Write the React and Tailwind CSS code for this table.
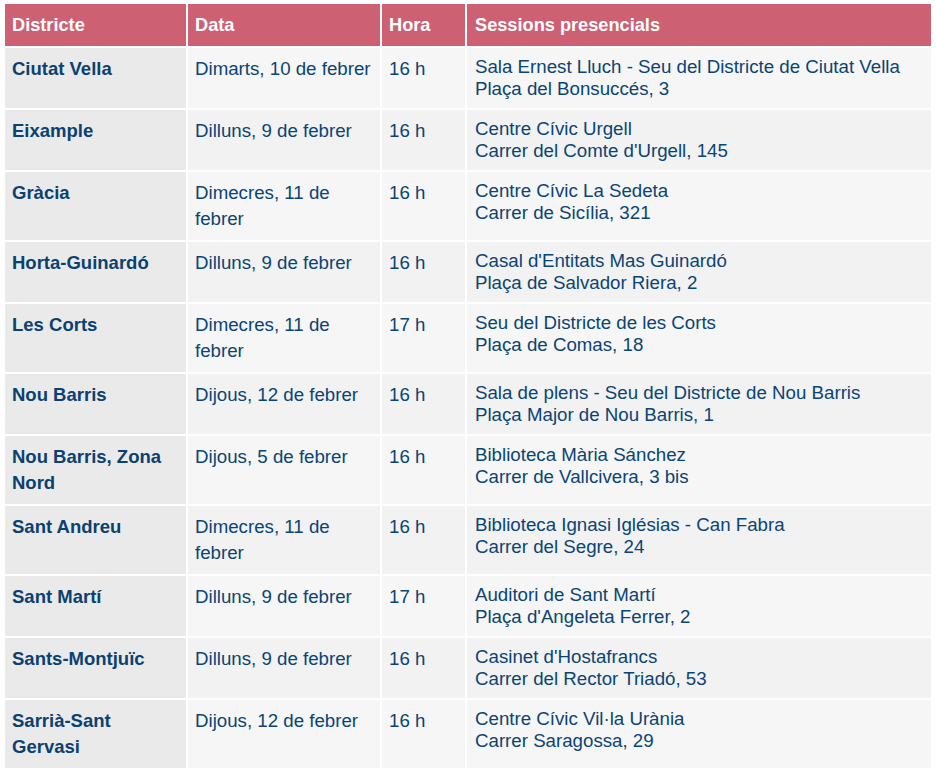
import React from 'react'

const rows = [
  { d: 'Ciutat Vella', data: 'Dimarts, 10 de febrer', hora: '16 h', lloc: 'Sala Ernest Lluch - Seu del Districte de Ciutat Vella', adr: 'Plaça del Bonsuccés, 3' },
  { d: 'Eixample', data: 'Dilluns, 9 de febrer', hora: '16 h', lloc: 'Centre Cívic Urgell', adr: "Carrer del Comte d'Urgell, 145" },
  { d: 'Gràcia', data: 'Dimecres, 11 de febrer', hora: '16 h', lloc: 'Centre Cívic La Sedeta', adr: 'Carrer de Sicília, 321' },
  { d: 'Horta-Guinardó', data: 'Dilluns, 9 de febrer', hora: '16 h', lloc: "Casal d'Entitats Mas Guinardó", adr: 'Plaça de Salvador Riera, 2' },
  { d: 'Les Corts', data: 'Dimecres, 11 de febrer', hora: '17 h', lloc: 'Seu del Districte de les Corts', adr: 'Plaça de Comas, 18' },
  { d: 'Nou Barris', data: 'Dijous, 12 de febrer', hora: '16 h', lloc: 'Sala de plens - Seu del Districte de Nou Barris', adr: 'Plaça Major de Nou Barris, 1' },
  { d: 'Nou Barris, Zona Nord', data: 'Dijous, 5 de febrer', hora: '16 h', lloc: 'Biblioteca Mària Sánchez', adr: 'Carrer de Vallcivera, 3 bis' },
  { d: 'Sant Andreu', data: 'Dimecres, 11 de febrer', hora: '16 h', lloc: 'Biblioteca Ignasi Iglésias - Can Fabra', adr: 'Carrer del Segre, 24' },
  { d: 'Sant Martí', data: 'Dilluns, 9 de febrer', hora: '17 h', lloc: 'Auditori de Sant Martí', adr: "Plaça d'Angeleta Ferrer, 2" },
  { d: 'Sants-Montjuïc', data: 'Dilluns, 9 de febrer', hora: '16 h', lloc: "Casinet d'Hostafrancs", adr: 'Carrer del Rector Triadó, 53' },
  { d: 'Sarrià-Sant Gervasi', data: 'Dijous, 12 de febrer', hora: '16 h', lloc: 'Centre Cívic Vil·la Urània', adr: 'Carrer Saragossa, 29' },
]

export default function App() {
  return (
    <div className="min-h-screen bg-white pl-[3px] pt-[2px] text-[18.7px] text-[#0a4475]" style={{ fontFamily: '"Liberation Sans", Arial, sans-serif' }}>
      <table className="border-separate border-spacing-[2px] table-fixed w-[930px]">
        <colgroup>
          <col className="w-[181px]" />
          <col className="w-[192px]" />
          <col className="w-[83px]" />
          <col className="w-[464px]" />
        </colgroup>
        <thead>
          <tr className="bg-[#cd6073] text-white text-left text-[18.2px]">
            <th className="px-[7px] py-[8px] leading-[26px] font-bold">Districte</th>
            <th className="px-[7px] py-[8px] leading-[26px] font-bold">Data</th>
            <th className="px-[7px] py-[8px] leading-[26px] font-bold">Hora</th>
            <th className="px-[8px] py-[8px] leading-[26px] font-bold">Sessions presencials</th>
          </tr>
        </thead>
        <tbody>
          {rows.map((r, i) => {
            const bg = i % 2 === 0 ? 'bg-[#f6f6f6]' : 'bg-[#f2f2f2]'
            return (
              <tr key={i} className="align-top">
                <td className="bg-[#eaeaea] px-[7px] py-[8px] leading-[26px] font-bold text-[18.5px] text-[#0b4170]">{r.d}</td>
                <td className={`${bg} px-[7px] py-[8px] leading-[26px]`}>{r.data}</td>
                <td className={`${bg} px-[7px] py-[8px] leading-[26px]`}>{r.hora}</td>
                <td className={`${bg} px-[8px] py-[8px] leading-[22px]`}>
                  {r.lloc}
                  <br />
                  {r.adr}
                </td>
              </tr>
            )
          })}
        </tbody>
      </table>
    </div>
  )
}
